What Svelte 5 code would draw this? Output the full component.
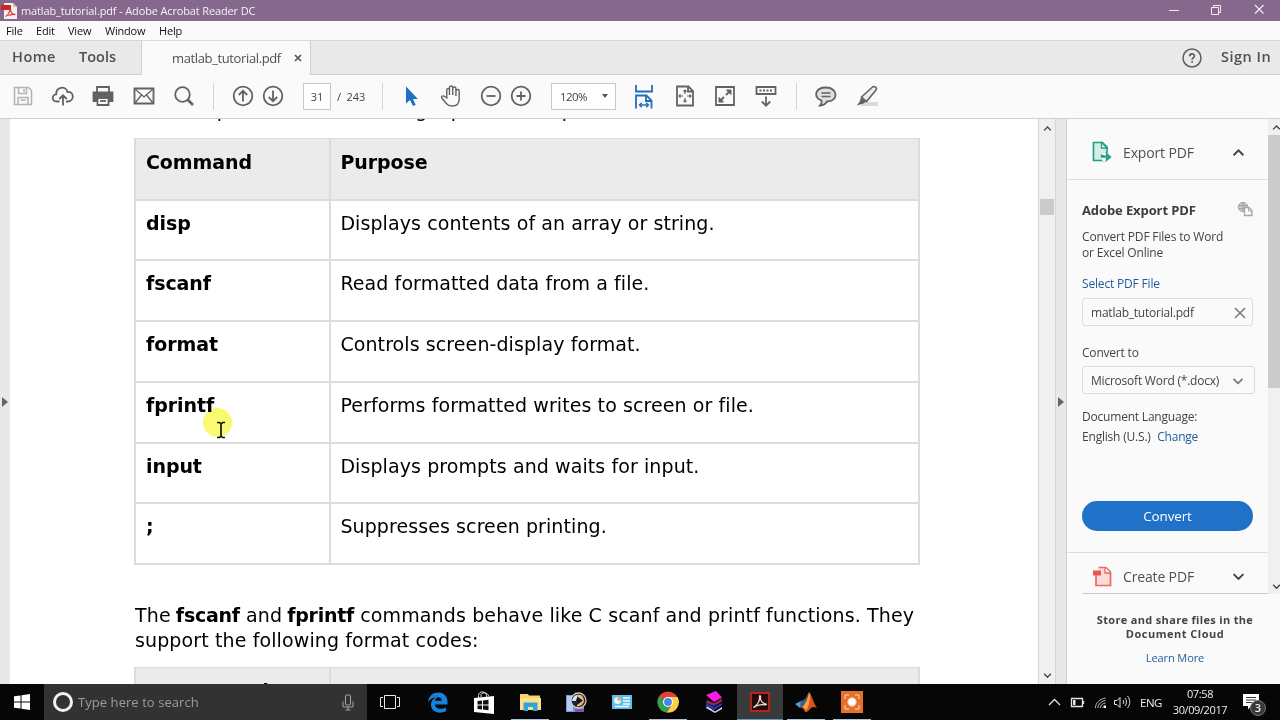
<script lang="ts">
  type Row = { name: string; purpose: string; h: number };

  const menus = ['File', 'Edit', 'View', 'Window', 'Help'];

  const rows: Row[] = [
    { name: 'disp', purpose: 'Displays contents of an array or string.', h: 60 },
    { name: 'fscanf', purpose: 'Read formatted data from a file.', h: 61 },
    { name: 'format', purpose: 'Controls screen-display format.', h: 61 },
    { name: 'fprintf', purpose: 'Performs formatted writes to screen or file.', h: 60.6 },
    { name: 'input', purpose: 'Displays prompts and waits for input.', h: 60.4 },
    { name: ';', purpose: 'Suppresses screen printing.', h: 61 },
  ];
</script>

{#snippet chevron(up: boolean, size: number)}
  <svg class="chev" width={size} height={size} viewBox="0 0 12 12">
    <path d={up ? 'M1.5 8.5 6 4l4.5 4.5' : 'M1.5 3.8 6 8.3l4.5-4.5'} />
  </svg>
{/snippet}

<div class="app">
  <header class="titlebar">
    <svg class="logo" width="17" height="17" viewBox="0 0 17 17">
      <path d="M3 1h9l4 4v12H3z" fill="#f4eeee" />
      <path d="M12 1v4h4z" fill="#c9bcc4" />
      <path d="M0 3h10v5H0z" fill="#d22424" />
      <path d="M4.500 14.500c2-1 4-4 4.500-7 .5-1 1 0 .5 1.500 1 2 3 3.500 5 3.500-2-.5-5 .2-7 1" fill="none" stroke="#d43a34" stroke-width="1.200" />
    </svg>
    <span class="title">matlab_tutorial.pdf - Adobe Acrobat Reader DC</span>
    <svg class="winbtns" width="110" height="21" viewBox="0 0 110 21" fill="none" stroke="#f1ebf2">
      <path d="M9 10.500h10" />
      <path d="M51.500 7.500h7v7h-7zM53.500 7.500v-2h7v7h-2" />
      <path d="m95 5 8.500 8.500M103.500 5 95 13.500" stroke-width="1.200" />
    </svg>
  </header>

  <nav class="menubar">
    {#each menus as m (m)}
      <span class={m.toLowerCase()}>{m}</span>
    {/each}
  </nav>

  <div class="tabs">
    <span class="home">Home</span>
    <span class="tools">Tools</span>
    <div class="tab">
      <span>matlab_tutorial.pdf</span>
      <svg width="8" height="8" viewBox="0 0 8 8"><path d="m1 1 6 6M7 1 1 7" stroke="#555" stroke-width="1.700" /></svg>
    </div>
    <svg class="help-icon" width="20" height="20" viewBox="0 0 20 20">
      <circle cx="10" cy="10" r="9" fill="none" stroke="#5e5e5e" stroke-width="1.500" />
      <path d="M7.700 8.200c0-3.200 4.700-3 4.700-.3 0 1.700-2.300 1.700-2.300 3.800M10.100 13v1.700" fill="none" stroke="#5e5e5e" stroke-width="1.600" />
    </svg>
    <span class="signin">Sign In</span>
  </div>

  <div class="toolbar">
    <div class="group file-tools">
      <svg class="ic pale" viewBox="0 0 24 24"><path d="M3.500 3.500h14l3 3v14h-17zM7.500 3.500v6h8v-6M13 5v3M7 20.500v-7h10v7M9.500 16h5" stroke-width="1.500" /></svg>
      <svg class="ic" viewBox="0 0 24 24"><path d="M8.500 17.500H6c-5.500 0-5.500-7-.8-7.200C5 2.500 15 1.500 16.500 8c7-.8 7 9 .5 9.500h-2M12 21.500v-10M8.300 15 12 11.200l3.700 3.800" /></svg>
      <svg class="ic" viewBox="0 0 24 24"><path d="M6 8V3h12v5" /><path class="solid" d="M2.500 8.500h19V17h-3v-3h-13v3h-3z" /><path d="M6.500 14h11v7h-11z" fill="#fff" /><path d="M9 17h6" /></svg>
      <svg class="ic" viewBox="0 0 24 24"><path d="M2.500 4.500h19v15h-19z" /><path d="m3 5 9 8 9-8M3 19l6.500-8M21 19l-6.500-8" stroke-width="1.300" /></svg>
      <svg class="ic" viewBox="0 0 24 24"><circle cx="10.500" cy="10.500" r="7.300" /><path d="m15.500 15.500 5.500 5.500" stroke-width="2.700" /></svg>
    </div>
    <i class="sep s1"></i>
    <div class="group nav-tools">
      <svg class="ic" viewBox="0 0 24 24"><circle cx="12" cy="12" r="9.300" /><path d="M12 17.500V7M7.800 11 12 6.800l4.200 4.200" /></svg>
      <svg class="ic" viewBox="0 0 24 24"><circle cx="12" cy="12" r="9.300" /><path d="M12 6.500V17M7.800 13l4.200 4.200 4.200-4.200" /></svg>
    </div>
    <div class="pageno">31</div>
    <span class="total">/&nbsp; 243</span>
    <i class="sep s2"></i>
    <svg class="ic arrow" viewBox="0 0 24 24"><path d="M7 2.500v17l4-3.500 3 6 2.700-1.300-2.800-5.700h5z" fill="#1d6fc4" stroke="none" /></svg>
    <svg class="ic hand" viewBox="0 0 24 24"><path d="M7 14V6c0-2 2.500-2 2.500 0v5V3.500c0-2 3-2 3 0V11 4.500c0-2 3-2 3 0V12 7c0-2 3-2 3 0v8c0 5-2.500 7-6.500 7-4.500 0-5-2-9.500-8-1-1.700 1-2.800 2.500-1.500z" stroke-width="1.300" transform="translate(-.8 0) scale(1.08 1)" /></svg>
    <div class="group zoom-tools">
      <svg class="ic" viewBox="0 0 24 24"><circle cx="12" cy="12" r="9.300" /><path d="M7.500 12h9" /></svg>
      <svg class="ic" viewBox="0 0 24 24"><circle cx="12" cy="12" r="9.300" /><path d="M7.500 12h9M12 7.500v9" /></svg>
    </div>
    <div class="zoom"><span>120%</span><i></i></div>
    <div class="group view-tools">
      <svg class="ic blue" viewBox="0 0 24 24"><path d="M4 .5v6.500h16V.5M4 24V11h10.500l5 5v8M14 11v5.500h5" /><path d="M7.500 20.500h9M9.800 18.300l-2.300 2.200 2.300 2.200M14.200 18.300l2.300 2.200-2.300 2.200" stroke-width="1.400" /></svg>
      <svg class="ic" viewBox="0 0 24 24"><path d="M4 2.500h11.500l4.500 4.500v14.500H4zM15 2.500V7.500h5" /><path d="M12 6v4M12 14v4M6 12h4M14 12h4M10.500 7.500 12 6l1.500 1.500M10.500 16.500 12 18l1.500-1.500M7.500 10.500 6 12l1.500 1.500M16.500 10.500 18 12l-1.500 1.500" stroke-width="1.200" /></svg>
      <svg class="ic" viewBox="0 0 24 24"><path d="M3 3h18v18H3z" /><path d="M13 11 16.500 7.500M11 13 7.500 16.500" /><path d="M13.500 6H18v4.500zM6 13.500V18h4.500z" fill="#626262" stroke-width="1" /></svg>
      <svg class="ic" viewBox="0 0 24 24"><path d="M2.500 3h19v7h-19zM12 12.500v9M7.800 17.500 12 21.700l4.200-4.200" /><path d="M5.500 6.500h13" stroke-dasharray="2 1.500" /></svg>
    </div>
    <i class="sep s3"></i>
    <svg class="ic comment" viewBox="0 0 24 24"><path d="M12 3.500c12.500 0 12.500 14 1 14-1.500 2.500-4 4-7 4 1.500-1.500 2-3 1.500-5C-1 13 1 3.500 12 3.500z" fill="#e0e0e0" /><path d="M7.500 9h9M7.500 12.500h9" stroke-width="1.300" /></svg>
    <svg class="ic pen" viewBox="0 0 24 24"><path d="M8 18h15v4H5z" fill="#dadada" stroke="none" /><path d="M6.500 13 17.500 3c2-1.500 5 1 3.500 3l-9.500 11.500z" fill="#eee" stroke-width="1.600" /><path d="m6 13.500 5 4-2.500 2L1.500 21.500l3-3.500z" fill="#626262" stroke="none" /></svg>
  </div>

  <div class="main">
    <aside class="left"><i></i></aside>
    <section class="page">
      <p class="intro">MATLAB provides the following input and output related commands:</p>
      <div class="table">
        <div class="row head"><b>Command</b><b>Purpose</b></div>
        {#each rows as r (r.name)}
          <div class="row" style:height="{r.h}px"><b>{r.name}</b><span>{r.purpose}</span></div>
        {/each}
      </div>
      <p class="para">
        The <b>fscanf</b> and <b>fprintf</b> commands behave like C scanf and printf functions. They<br />support the following format codes:
      </p>
      <div class="table second">
        <div class="row head"><b>Format Code</b><b>Purpose</b></div>
      </div>
      <div class="halo"></div>
      <svg class="ibeam" width="10" height="18" viewBox="0 0 10 18"><path d="M1 1.500h2.500L5 3l1.500-1.500H9M5 3v12M1 16.500h2.500L5 15l1.500 1.500H9" fill="none" stroke="#111" stroke-width="1.700" /></svg>
    </section>
    <div class="scroll">
      {@render chevron(true, 9)}
      <i></i>
      {@render chevron(false, 9)}
    </div>
    <div class="gutter"><i></i></div>
    <aside class="panel">
      <div class="upper">
        <div class="tools-list">
          <div class="tool export">
            <svg width="20" height="22" viewBox="0 0 20 22">
              <path d="M14 19.500H1.500v-18h9l4.500 4.500v6" fill="#d3eee6" stroke="#23a085" stroke-width="1.700" />
              <path d="M9.500 1.500V7H15z" fill="#fff" stroke="#23a085" stroke-width="1.300" />
              <path d="M8.500 12h10v8h-8z" fill="#fafafa" />
              <path d="M9.500 13.500v2.500h8M14.500 12.500l4 3.500-4 3.500z" fill="#23a085" stroke="#23a085" stroke-width="1.400" />
            </svg>
            <span>Export PDF</span>
            {@render chevron(true, 13)}
          </div>
          <div class="body">
            <div class="heading">
              <b>Adobe Export PDF</b>
              <svg width="16" height="16" viewBox="0 0 16 16" fill="none" stroke="#a5a5a5">
                <circle cx="6" cy="6" r="4.700" fill="#c8c8c8" /><path d="M1.500 4.500h9M1.500 7.500h9M6 1v9" stroke="#999" stroke-width=".8" />
                <path d="M7.500 6.500h4.500l3 3v5H7.500z" fill="#fafafa" stroke-width="1.300" /><path d="M11.500 6.500v3.500H15" />
              </svg>
            </div>
            <p class="desc">Convert PDF Files to Word<br />or Excel Online</p>
            <a class="select-file" href="#file">Select PDF File</a>
            <div class="field">
              <span class="fname">matlab_tutorial.pdf</span>
              <svg width="12" height="12" viewBox="0 0 12 12"><path d="m1 1 10 10M11 1 1 11" stroke="#777" stroke-width="1.500" /></svg>
            </div>
            <span class="label">Convert to</span>
            <div class="field format">
              <span class="fmt">Microsoft Word (*.docx)</span>
              {@render chevron(false, 12)}
            </div>
            <p class="lang"><span>Document Language:</span><br /><span class="us">English (U.S.)</span> <a href="#lang">Change</a></p>
            <button>Convert</button>
          </div>
          <div class="tool create">
            <svg width="20" height="21" viewBox="0 0 20 21">
              <path d="M4 9v10.500h14.500V6l-4.500-4.500H6.500" fill="#fbdcd8" stroke="#e8695f" stroke-width="1.700" />
              <path d="M13 1.500V7h5.500" fill="#fff" stroke="#e8695f" stroke-width="1.300" />
              <path d="M1 4.500h8v5H1z" fill="#e8564e" />
            </svg>
            <span>Create PDF</span>
            {@render chevron(false, 13)}
          </div>
        </div>
        <div class="side-scroll">
          {@render chevron(true, 9)}
          <i></i>
          {@render chevron(false, 9)}
        </div>
      </div>
      <div class="promo">
        <b class="l1">Store and share files in the</b>
        <b class="l2">Document Cloud</b>
        <a href="#more">Learn More</a>
      </div>
    </aside>
  </div>

  <footer class="taskbar">
    <div class="start">
      <svg width="16" height="16" viewBox="0 0 16 16" fill="#fff"><path d="m0 2.300 6.500-.9v6.100H0zM7.500 1.200 16 0v7.500H7.500zM0 8.500h6.500v6.100L0 13.700zM7.500 8.500H16V16l-8.500-1.200z" /></svg>
    </div>
    <div class="search">
      <i class="cortana"></i>
      <span>Type here to search</span>
      <svg width="12" height="17" viewBox="0 0 12 17" fill="none" stroke="#a5a5a5"><rect x="3.500" y="1" width="5" height="10" rx="1" /><path d="M1 7.500v5.500h10V7.500M6 13v3M3.500 16h5" /></svg>
    </div>
    <div class="apps">
      <div class="cell view"><svg width="20" height="14" viewBox="0 0 20 14" fill="none" stroke="#e8e8e8"><path d="M4.500.5h11v13h-11zM3 2.500H.5v9H3M17 2.500h2.500v9H17" /></svg></div>
      <div class="cell"><svg width="20" height="21" viewBox="0 0 20 21"><path d="M0 10C1 3.500 5 .5 10.500.5 16.500.5 19.500 5 19.500 10v2.500H7c.2 4.500 6.500 5.500 11 2.700v4C11 22.500 3 20 3 12.500 3 9 5 6.500 8 5.200 4.500 5.500 2 7.500 0 10zm7.200-1.300h6.500c0-4.500-6-4.500-6.500 0z" fill="#1583dc" /></svg></div>
      <div class="cell"><svg width="20" height="23" viewBox="0 0 20 23"><path d="M4.500 7V4.500c0-5 8-4.500 8 0V6M7 6V4c0-3 7-3 7.500 1" fill="none" stroke="#ddd" /><path d="m0 7 20-2v18L0 21z" fill="#fff" /><path d="m3.500 10 4.500-.5v4H3.500zM9 9.400l5.500-.6v4.700H9zM3.500 14.500H8v4l-4.500-.4zM9 14.500h5.500v4.700L9 18.600z" fill="#111" /></svg></div>
      <div class="cell run"><svg width="21" height="18" viewBox="0 0 21 18"><path d="M0 1h8l1 1.500h11V17H0z" fill="#f6d56d" /><path d="M0 5h21v12H0z" fill="#fce08a" /><path d="M3.500 9.500h14V18h-4.500v-4H8v4H3.500z" fill="#32a3dd" /></svg></div>
      <div class="cell"><svg width="22" height="22" viewBox="0 0 22 22"><path d="M1 4h18v17H1z" fill="#6f9bdc" /><path d="M2 5h6v15H2z" fill="#b9c9f3" /><path d="M10 18h9v3h-9z" fill="#8a4fa8" /><circle cx="13.500" cy="9.500" r="7.500" fill="#18253c" stroke="#d5c9a8" stroke-width="1.300" /><path d="M7 10c1-7 8-8 11-4-4-1-7 0-7 4z" fill="#cee5f5" /><path d="M12 4c5 0 7 3 7 5.500S17 15 12 15.500z" fill="#e9b878" /><path d="m12 5.500 6 4-6 4.500z" fill="#151515" /></svg></div>
      <div class="cell"><svg width="20" height="16" viewBox="0 0 20 16"><path d="M0 1h20v14H0z" fill="#5bc0ef" /><circle cx="5.500" cy="6.500" r="3.500" fill="#e9f5fc" /><path d="M5.500 6.500V3A3.500 3.500 0 0 1 9 6.500z" fill="#e6ae42" /><path d="M11 4h7M11 7h7M11 10h7M3 12.500h14" stroke="#f1faff" stroke-width="1.300" /></svg></div>
      <div class="cell run"><svg width="22" height="22" viewBox="0 0 22 22"><circle cx="11" cy="11" r="10.500" fill="#e34133" /><path d="M2 5.500A10.500 10.500 0 0 0 10 21.500l4.500-8L11 11z" fill="#2fa350" /><path d="M11 6h9.500A10.500 10.500 0 0 1 10 21.500l5-8z" fill="#fbd043" /><circle cx="11" cy="11" r="5" fill="#fff" /><circle cx="11" cy="11" r="3.900" fill="#4286ee" /></svg></div>
      <div class="cell"><svg width="20" height="22" viewBox="0 0 20 22"><path d="m3 15 8 5.500 7-4.500v2l-7 4-9-5z" fill="#d8d8d8" /><path d="m2 12 8 4 8-4v2l-8 5-8-4z" fill="#2335c9" /><path d="m3 9 7 3 8-4.500v3L10 15l-8-3z" fill="#8d2a4a" /><path d="m2 4 10-4 6 6.500-8 4.500z" fill="#f91be3" /></svg></div>
      <div class="cell run active"><svg width="20" height="20" viewBox="0 0 20 20"><path d="M1 1h18v18H1z" fill="#2a0808" stroke="#b4251d" stroke-width="2" /><path d="M4 15c3-2 6-6 5.500-10.500 0-1.500 1.500-1 1 .8-.5 3.500 2.500 6.500 5.500 6.700 1 .3 0 1-1 .8-4-.7-7 .2-9.500 1.500-1 .9-2 1.500-1.500.7z" fill="none" stroke="#e8e2e2" stroke-width="1.200" /></svg></div>
      <div class="cell run"><svg width="22" height="20" viewBox="0 0 22 20"><path d="m0 12 6-3 3 3-4 4z" fill="#4e9fd0" /><path d="m6 9 4-2 4-7-4 12-3 3-2-1z" fill="#375f8d" /><path d="M14 0c3 3 4 10 8 16-3-2-5-1-7 1-2 3-4 3-5 3-1-3-2-4-4-4 4-3 6-9 8-16z" fill="#d9511e" /><path d="M14 0c2 5 1 12-3 19-1-3-2-4-4-4 4-3 6-9 7-15z" fill="#f3a147" /></svg></div>
      <div class="cell run"><svg width="22" height="22" viewBox="0 0 22 22"><path d="M0 0h22v22H0z" fill="#e5702c" /><circle cx="11" cy="11" r="4.200" fill="#fff" stroke="#f7bd91" /><path d="M4 8V4h4M14 4h4v4M18 14v4h-4M8 18H4v-4" fill="none" stroke="#fbd7bb" /></svg></div>
    </div>
    <div class="tray">
      <svg width="76" height="20" viewBox="0 0 76 20" fill="none" stroke="#e4e4e4">
        <path d="m1 13 5.500-5.500L12 13" stroke-width="1.300" />
        <path d="M23.500 6.500h11v8h-11zM35.500 9v3" stroke-width="1.300" /><path d="M25 8h2.500v5H25z" fill="#e4e4e4" stroke="none" />
        <path d="M47.500 16c0-5 4-9 10-10M50 16c0-4 3.500-7 7.500-7.500M52.500 16c0-3 2-4.500 5-5M55 16c0-1.500 1-2.500 2.500-2.500" stroke="#bdbdbd" /><path d="M56 14h2v2h-2z" fill="#fff" stroke="none" />
        <path d="M66.500 8.500h2.500l3-3v10l-3-3h-2.500z" />
      </svg>
      <svg class="waves" width="9" height="14" viewBox="0 0 9 14" fill="none" stroke="#dedede"><path d="M1 5c1 1.500 1 2.500 0 4M3 3c2 2.500 2 5.500 0 8M5.500 1c3 4 3 8 0 12" /></svg>
      <span class="eng">ENG</span>
      <div class="clock"><span class="time">07:58</span><span class="date">30/09/2017</span></div>
      <div class="notes">
        <svg width="16" height="16" viewBox="0 0 16 16"><path d="M0 0h16v12H8l-3 3.500V12H0z" fill="#fff" /><path d="M3 3.500h10M3 6h10M3 8.500h6" stroke="#333" /></svg>
        <i>3</i>
      </div>
    </div>
  </footer>
</div>

<style>
  :global(body) { margin: 0; overflow: hidden; }
  .app { width: 1280px; height: 720px; display: flex; flex-direction: column; overflow: hidden; background: #fafafa; color: #444; font-family: 'Open Sans', 'Noto Sans', sans-serif; font-size: 12px; white-space: nowrap; }
  .app * { box-sizing: border-box; }
  svg { display: block; flex: none; }
  p { margin: 0; }
  a { color: #1f5d99; text-decoration: none; }
  .chev { fill: none; stroke: #444; stroke-width: 1.8; }

  .titlebar { height: 21px; flex: none; display: flex; align-items: center; background: #86688c; color: #f7f1f8; padding: 0 10px 0 1px; }
  .title { font-size: 11px; margin-left: 3px; line-height: 20px; letter-spacing: -0.14px; }
  .winbtns { margin-left: auto; }

  .menubar { height: 20px; flex: none; display: flex; padding-left: 6px; border-bottom: 1px solid #d8d8d8; color: #111; font-size: 11px; line-height: 20px; letter-spacing: -0.2px; }
  .menubar span { flex: none; }
  .file { width: 30px; }
  .edit { width: 32px; }
  .view { width: 37px; }
  .window { width: 54px; }

  .tabs { height: 34px; flex: none; display: flex; align-items: center; background: #e9e9e9; border-bottom: 1px solid #cfcfcf; color: #505050; line-height: 18px; }
  .home, .tools, .signin { font-size: 14.5px; font-weight: 600; padding-bottom: 1px; }
  .home { width: 67px; margin-left: 12px; letter-spacing: 0.5px; }
  .tools { width: 62px; }
  .tab { width: 170px; height: 34px; align-self: flex-start; display: flex; align-items: center; background: #fafafa; border: solid #cfcfcf; border-width: 0 1px; padding-left: 30px; font-size: 13px; letter-spacing: -0.37px; }
  .tab span { width: 122px; }
  .help-icon { margin-left: 871px; }
  .signin { margin-left: 19px; letter-spacing: 0.5px; }

  .toolbar { height: 44px; flex: none; display: flex; align-items: center; padding: 0 0 1px 10.5px; border-bottom: 1px solid #d0d0d0; }
  .group { display: flex; flex: none; }
  .file-tools { gap: 16.4px; }
  .nav-tools { gap: 6px; margin-left: 17px; }
  .zoom-tools { gap: 6px; margin-left: 15px; }
  .view-tools { gap: 16.7px; margin-left: 16px; }
  .ic { width: 24px; height: 24px; flex: none; fill: none; stroke: #626262; stroke-width: 1.8; }
  .ic .solid { fill: #626262; }
  .pale { stroke: #b2b2b2; }
  .blue { stroke: #1f70b8; height: 25px; }
  .sep { width: 1px; height: 27px; flex: none; background: #d4d4d4; }
  .s1 { margin-left: 17px; }
  .pageno { width: 28px; height: 27px; margin-left: 18px; border: 1px solid #c8c8c8; background: #fff; text-align: center; line-height: 25px; font-size: 11px; }
  .total { width: 45px; margin-left: 6px; font-size: 11px; letter-spacing: -0.1px; }
  .arrow { margin-left: 16px; }
  .hand { margin-left: 17px; }
  .zoom { width: 65px; height: 27px; margin-left: 18px; padding: 0 7px 0 8px; border: 1px solid #c8c8c8; background: #fff; display: flex; justify-content: space-between; align-items: center; font-size: 11.5px; letter-spacing: -0.6px; }
  .zoom i { border: solid transparent; border-width: 4px 3.5px 0; border-top-color: #555; }
  .s3 { margin-left: 17.5px; }
  .comment { margin-left: 17px; }
  .pen { margin-left: 17.5px; }

  .main { flex: 1; min-height: 0; display: flex; }
  .left { width: 10px; flex: none; background: #e8e8e8; display: flex; align-items: center; padding-left: 2px; }
  .left i, .gutter i { border: solid transparent; border-width: 5px 0 5px 6px; border-left-color: #666; }
  .page { position: relative; width: 1028px; flex: none; overflow: hidden; background: #fff; color: #000; padding-left: 124px; font: 19px/25px 'DejaVu Sans', Verdana, sans-serif; letter-spacing: 0.09px; }
  .page b { letter-spacing: -0.08px; }
  .intro { height: 19px; line-height: 25px; margin-top: -21px; margin-bottom: 21px; letter-spacing: 0.03px; }
  .table { width: 785.5px; border: solid #dcdcdc; border-width: 1px 2px 0; }
  .row { display: grid; grid-template-columns: 195px 1fr; border-bottom: 2px solid #dcdcdc; }
  .row > * { padding: 10px 0 0 10px; }
  .row > :first-child { border-right: 2px solid #dcdcdc; }
  .row > :last-child { padding-left: 9.4px; }
  .head { height: 62px; background: #ebebeb; }
  .row.head > * { padding-top: 11px; }
  .para { margin-top: 38px; height: 64px; padding: 0.5px 0 0 1px; letter-spacing: 0.12px; }
  .para b { letter-spacing: -0.25px; margin-left: -1px; }
  .second .row.head > * { padding-top: 11px; }
  .halo { position: absolute; left: 193px; top: 289px; width: 29px; height: 29px; border-radius: 50%; background: #fafa70; mix-blend-mode: multiply; }
  .ibeam { position: absolute; left: 206px; top: 302px; }

  .scroll { width: 18px; flex: none; display: flex; flex-direction: column; align-items: center; background: #f0f0f0; border: solid #d6d6d6; border-width: 0 1px; padding: 5px 0 4px; }
  .scroll i { width: 14px; height: 16px; margin-top: 66px; margin-bottom: auto; background: #cbcbcb; }
  .gutter { width: 11px; flex: none; display: flex; align-items: center; padding-left: 2px; background: #e8e8e8; border-right: 1px solid #d0d0d0; }

  .panel { width: 213px; flex: none; display: flex; flex-direction: column; }
  .upper { height: 475px; display: flex; }
  .tools-list { width: 201px; }
  .tool { display: flex; align-items: center; padding-left: 25px; font-size: 14px; letter-spacing: -0.15px; color: #505050; }
  .tool span { width: 109px; margin-left: 11px; }
  .export { height: 61px; padding-top: 6px; border-bottom: 1px solid #dedede; }
  .create { height: 41px; padding-top: 7px; border-top: 1px solid #dedede; }
  .body { height: 372px; padding: 22px 0 0 15px; }
  .heading { display: flex; justify-content: space-between; width: 171px; height: 27px; line-height: 17px; font-size: 13px; color: #3c3c3c; letter-spacing: -0.1px; }
  .heading svg { margin-top: -1px; }
  .desc { line-height: 16px; height: 46px; letter-spacing: -0.17px; }
  .select-file { display: block; height: 23px; line-height: 18px; letter-spacing: -0.17px; }
  .field { width: 171px; height: 28px; border: 1px solid #dcdcdc; border-radius: 3px; padding: 1px 6px 0 8px; display: flex; justify-content: space-between; align-items: center; letter-spacing: -0.22px; }
  .label { display: block; height: 40px; padding-top: 18px; line-height: 17px; letter-spacing: -0.2px; }
  .format { width: 173px; padding-right: 10px; }
  .format .chev { stroke: #777; }
  .lang { padding-top: 13px; line-height: 20px; height: 107px; letter-spacing: -0.2px; }
  .us { margin-right: 3.5px; }
  button { display: block; width: 171px; height: 30px; padding: 0 0 1px; border: 0; border-radius: 15px; background: #1f72c8; color: #fff; font: 13.5px 'Open Sans', sans-serif; letter-spacing: -0.15px; }
  .side-scroll { width: 12px; background: #f0f0f0; display: flex; flex-direction: column; align-items: center; padding: 4px 0 3px; overflow: hidden; }
  .side-scroll .chev { margin-left: 4px; }
  .side-scroll i { width: 12px; height: 253px; margin: 3px 0 auto; background: #cbcbcb; }
  .promo { flex: 1; width: 186px; margin: -1px 0 0 15px; padding: 19px 0 0; border-top: 1px solid #c9c9c9; display: flex; flex-direction: column; align-items: center; font-size: 11px; line-height: 14px; letter-spacing: 0.33px; }
  .l2 { letter-spacing: 0.5px; }
  .promo a { margin-top: 10px; letter-spacing: -0.1px; }

  .taskbar { height: 36px; flex: none; display: flex; background: #070606; color: #eee; }
  .start { width: 44px; display: flex; align-items: center; padding-left: 14px; }
  .search { width: 323px; background: #323232; display: flex; align-items: center; color: #9b9b9b; font-size: 13px; padding: 0 13px 0 9px; }
  .search span { margin-left: 5px; letter-spacing: 0.06px; }
  .search svg { margin-left: auto; }
  .cortana { width: 20px; height: 20px; border: 3px solid #f2f2f2; border-radius: 50%; }
  .apps { display: flex; }
  .cell { width: 46px; display: flex; align-items: center; justify-content: center; position: relative; }
  .cell.view { width: 48px; padding-right: 2px; }
  .run::after { content: ''; position: absolute; left: 4px; right: 4px; bottom: 0; height: 1px; background: #a4c3e4; }
  .active { background: #3a3a3a; }
  .run.active::after { left: 0; right: 0; background: #5f9bd0; }
  .tray { flex: 1; display: flex; align-items: center; padding-left: 173px; font-size: 12px; }
  .waves { margin-left: -2px; }
  .eng { width: 32px; margin-left: 9px; font-size: 11.5px; letter-spacing: -0.5px; }
  .clock { width: 56px; display: flex; flex-direction: column; align-items: center; line-height: 16.5px; font-size: 11px; letter-spacing: -0.4px; }
  .notes { position: relative; margin-left: 15px; }
  .notes i { position: absolute; left: 7px; top: 6px; width: 16px; height: 16px; border-radius: 50%; background: #383838; border: 1px solid #777; font: 600 11px/14px 'Open Sans', sans-serif; text-align: center; }
</style>
